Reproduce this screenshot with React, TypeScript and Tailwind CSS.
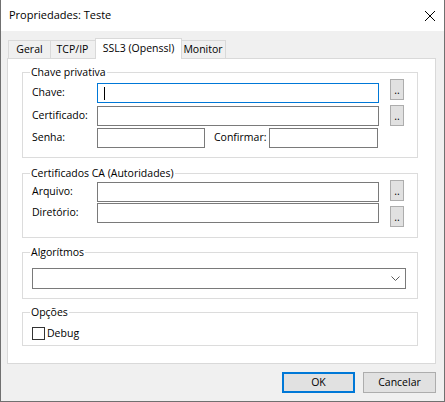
import React from 'react';

function DotsButton({ className = '' }: { className?: string }) {
  return (
    <button className={`w-[14px] h-[21px] bg-[#e1e1e1] border border-[#adadad] flex items-end justify-center pb-[3px] text-[10.5px] leading-[11px] ${className}`}>
      ..
    </button>
  );
}

function Field({ width, focused = false }: { width: number; focused?: boolean }) {
  return (
    <div
      className={`h-[20px] bg-white border flex items-center ${focused ? 'border-[#0078d7]' : 'border-[#7a7a7a]'}`}
      style={{ width }}
    >
      {focused && <div className="ml-[6px] w-px h-[13px] bg-black" />}
    </div>
  );
}

function Group({ title, height, className = '', children }: { title: string; height: number; className?: string; children: React.ReactNode }) {
  return (
    <fieldset className={`ml-[14px] w-[396px] border border-[#dcdcdc] ${className}`} style={{ height }}>
      <legend className="ml-[7px] px-[1px] leading-[15px]">{title}</legend>
      {children}
    </fieldset>
  );
}

export default function App() {
  return (
    <div className="w-[445px] h-[402px] flex flex-col bg-[#f0f0f0] border-x border-b border-[#707070] font-['Open_Sans','Noto_Sans',sans-serif] text-[10.5px] text-black overflow-hidden">
      {/* Title bar */}
      <div className="h-[31px] shrink-0 bg-white flex items-center justify-between pl-[8px] pr-[9px]">
        <span className="text-[11px]">Propriedades: Teste</span>
        <svg width="10" height="10" viewBox="0 0 10 10" className="mt-[1px]">
          <path d="M0 0 L10 10 M10 0 L0 10" stroke="#000" strokeWidth="1" />
        </svg>
      </div>

      <div className="flex-1 pt-[7px] pl-[6px] flex flex-col">
        {/* Tabs */}
        <div className="flex items-end h-[20px] ml-[1px]">
          <div className="w-[43px] h-[18px] border-t border-l border-r border-[#d9d9d9] flex items-center justify-center pt-[1px]">Geral</div>
          <div className="-ml-px w-[46px] h-[18px] border-t border-r border-[#d9d9d9] flex items-center justify-center pt-[1px]">TCP/IP</div>
          <div className="-ml-px relative z-10 w-[87px] h-[21px] -mb-px bg-white border-t border-l border-r border-[#d9d9d9] flex items-center justify-center">SSL3 (Openssl)</div>
          <div className="-ml-px w-[45px] h-[18px] border-t border-r border-[#d9d9d9] flex items-center justify-center pt-[1px]">Monitor</div>
        </div>

        {/* Panel */}
        <div className="w-[429px] h-[306px] bg-white border border-[#d9d9d9] flex flex-col pt-[6px]">
          <Group title="Chave privativa" height={93}>
            <div className="flex">
              <div className="flex flex-col pt-[3px] pl-[9px]">
                <div className="flex items-center h-[20px]">
                  <span className="w-[65px]">Chave:</span>
                  <Field width={282} focused />
                </div>
                <div className="flex items-center h-[20px] mt-[3px]">
                  <span className="w-[65px]">Certificado:</span>
                  <Field width={282} />
                </div>
                <div className="flex items-center h-[20px] mt-[2px]">
                  <span className="w-[65px]">Senha:</span>
                  <Field width={108} />
                  <span className="ml-[9px] w-[55px]">Confirmar:</span>
                  <Field width={109} />
                </div>
              </div>
              <div className="flex flex-col gap-[5px] -mt-px ml-[11px]">
                <DotsButton />
                <DotsButton />
              </div>
            </div>
          </Group>

          <Group title="Certificados CA (Autoridades)" height={72} className="mt-[8px]">
            <div className="flex">
              <div className="flex flex-col pt-[1px] pl-[9px] gap-[1px]">
                <div className="flex items-center h-[20px]">
                  <span className="w-[65px]">Arquivo:</span>
                  <Field width={282} />
                </div>
                <div className="flex items-center h-[20px]">
                  <span className="w-[65px]">Diretório:</span>
                  <Field width={282} />
                </div>
              </div>
              <div className="flex flex-col gap-[5px] -mt-px ml-[11px]">
                <DotsButton />
                <DotsButton />
              </div>
            </div>
          </Group>

          <Group title="Algorítmos" height={54} className="mt-[7px]">
            <div className="pt-[8px] pl-[9px]">
              <div className="w-[374px] h-[21px] bg-white border border-[#7a7a7a] flex items-center justify-end pr-[5px]">
                <svg width="9" height="5" viewBox="0 0 9 5">
                  <path d="M0.5 0.5 L4.5 4.5 L8.5 0.5" stroke="#5a5a5a" strokeWidth="1" fill="none" />
                </svg>
              </div>
            </div>
          </Group>

          <Group title="Opções" height={41} className="mt-[6px]">
            <div className="pt-[6px] pl-[9px] flex items-center">
              <div className="w-[13px] h-[13px] bg-white border border-[#333333]" />
              <span className="ml-[2px]">Debug</span>
            </div>
          </Group>
        </div>

        {/* Buttons */}
        <div className="flex justify-end gap-[8px] mt-[8px] pr-[8px]">
          <button className="w-[73px] h-[21px] bg-[#e1e1e1] border-2 border-[#0078d7] flex items-center justify-center">OK</button>
          <button className="w-[73px] h-[21px] bg-[#e1e1e1] border border-[#adadad] flex items-center justify-center">Cancelar</button>
        </div>
      </div>
    </div>
  );
}
